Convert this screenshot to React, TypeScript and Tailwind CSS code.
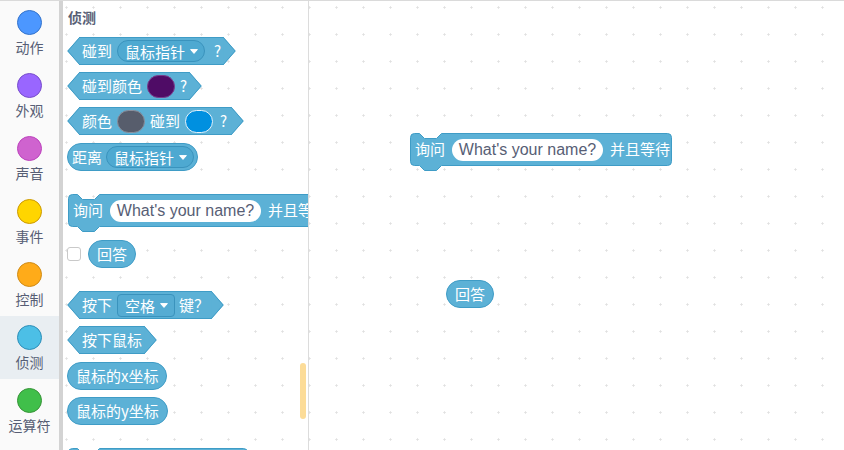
import React from 'react';

const cats = [
  { label: '动作', cls: 'bg-[#4c97ff] border-[#3373cc]' },
  { label: '外观', cls: 'bg-[#9966ff] border-[#774dcb]' },
  { label: '声音', cls: 'bg-[#cf63cf] border-[#bd42bd]' },
  { label: '事件', cls: 'bg-[#ffd500] border-[#cc9900]' },
  { label: '控制', cls: 'bg-[#ffab19] border-[#cf8b17]' },
  { label: '侦测', cls: 'bg-[#4cbfe6] border-[#2e8eb8]', active: true },
  { label: '运算符', cls: 'bg-[#40bf4a] border-[#389438]' },
];

function Caret() {
  return (
    <svg width="8" height="5" viewBox="0 0 8 5" className="block shrink-0">
      <path d="M0.6,0.6 L7.4,0.6 L4,4.4 Z" fill="#fff" stroke="#fff" strokeWidth="1" strokeLinejoin="round" />
    </svg>
  );
}

function Dropdown({ text, square }: { text: string; square?: boolean }) {
  return (
    <div
      className={
        square
          ? 'flex h-[23px] items-center gap-[5px] rounded-[4px] border border-[#3a93bd] bg-[#55acd3] pl-[7px] pr-[6px]'
          : 'flex h-[22px] items-center gap-[5px] rounded-full border border-[#3a93bd] bg-[#4ea9d1] pl-[7px] pr-[6px]'
      }
    >
      <span className="leading-none">{text}</span>
      <Caret />
    </div>
  );
}

function Hex({ children, className }: { children: React.ReactNode; className?: string }) {
  return (
    <div className={'flex h-[28px] shrink-0 text-[15px] text-white ' + (className || '')}>
      <svg width="12" height="28" className="block shrink-0 overflow-visible">
        <polygon points="12.6,0 0.4,14 12.6,28" fill="#5cb1d6" />
        <polyline points="12.6,0.5 0.8,14 12.6,27.5" fill="none" stroke="#3f9cc6" strokeWidth="1" />
      </svg>
      <div className="flex items-center gap-[5px] border-y border-[#3f9cc6] bg-[#5cb1d6] px-[3px]">{children}</div>
      <svg width="12" height="28" className="block shrink-0 overflow-visible">
        <polygon points="-0.6,0 11.6,14 -0.6,28" fill="#5cb1d6" />
        <polyline points="-0.6,0.5 11.2,14 -0.6,27.5" fill="none" stroke="#3f9cc6" strokeWidth="1" />
      </svg>
    </div>
  );
}

function Reporter({ children, className }: { children: React.ReactNode; className?: string }) {
  return (
    <div
      className={
        'flex h-[28px] shrink-0 items-center rounded-full border border-[#3f9cc6] bg-[#5cb1d6] text-[15px] text-white ' +
        (className || '')
      }
    >
      {children}
    </div>
  );
}

function CommandShape({ w, h }: { w: number; h: number }) {
  const d = `M0.5,4.5 A4,4 0 0 1 4.5,0.5 H9.5 l5,5 h12 l5,-5 H${w - 4.5} A4,4 0 0 1 ${w - 0.5},4.5 V${h - 4.5} A4,4 0 0 1 ${w - 4.5},${h - 0.5} H31.5 l-5,5 h-12 l-5,-5 H4.5 A4,4 0 0 1 0.5,${h - 4.5} Z`;
  return (
    <svg width={w + 1} height={h + 6} className="absolute left-0 top-0 block">
      <path d={d} fill="#5cb1d6" stroke="#3f9cc6" strokeWidth="1" />
    </svg>
  );
}

function AskBlock({ className }: { className?: string }) {
  return (
    <div className={'relative h-[38px] w-[262px] shrink-0 ' + (className || '')}>
      <CommandShape w={262} h={33} />
      <div className="relative flex h-[33px] items-center gap-[7px] pl-[5px] text-[15px] text-white">
        <span className="whitespace-nowrap">询问</span>
        <div className="flex h-[22px] w-[151px] shrink-0 items-center justify-center rounded-full bg-white text-[16px] text-[#575e75] [font-family:'Liberation_Sans',Arial,sans-serif]">
          What's your name?
        </div>
        <span className="whitespace-nowrap">并且等待</span>
      </div>
    </div>
  );
}

function Swatch({ cls }: { cls: string }) {
  return <div className={'h-[23px] w-[28px] shrink-0 rounded-full border ' + cls} />;
}

export default function App() {
  return (
    <div className="flex h-[450px] w-[844px] overflow-hidden border-t border-[#dadada] bg-white bg-[radial-gradient(circle,#e0e0e0_0.9px,transparent_1.3px)] bg-[length:27px_27px] bg-[position:-1px_-7px] [font-family:'Noto_Sans_CJK_SC','Noto_Sans',sans-serif]">
      {/* category menu */}
      <div className="flex w-[59px] shrink-0 flex-col bg-[#fafafa]">
        {cats.map((c) => (
          <div
            key={c.label}
            className={'flex h-[63px] shrink-0 flex-col items-center ' + (c.active ? 'bg-[#e9eef2]' : '')}
          >
            <div className={'mt-[9px] h-[25px] w-[25px] rounded-full border ' + c.cls} />
            <div className="mt-[3px] whitespace-nowrap text-[14px] leading-[18px] text-[#575e75]">{c.label}</div>
          </div>
        ))}
      </div>
      <div className="w-[4px] shrink-0 bg-[#d3d3d3]" />

      {/* palette */}
      <div className="relative flex w-[246px] shrink-0 flex-col items-start overflow-hidden border-r border-[#dcdcdc] pl-[4px]">
        <div className="ml-[1px] mt-[6px] h-[20px] text-[14px] font-bold leading-[20px] text-[#575e75]">侦测</div>

        <Hex className="mt-[10px]">
          <span>碰到</span>
          <Dropdown text="鼠标指针" />
          <span className="ml-[4px]">?</span>
        </Hex>

        <Hex className="mt-[7px]">
          <span>碰到颜色</span>
          <Swatch cls="bg-[#4f0c66] border-[#7a3d8c]" />
          <span>?</span>
        </Hex>

        <Hex className="mt-[7px]">
          <span>颜色</span>
          <Swatch cls="bg-[#575d6c] border-[#8a8f9c]" />
          <span>碰到</span>
          <Swatch cls="bg-[#0090e0] border-[#e6f3fb]" />
          <span className="ml-[2px] mr-[2px]">?</span>
        </Hex>

        <Reporter className="mt-[8px] gap-[4px] pl-[4px] pr-[3px]">
          <span>距离</span>
          <Dropdown text="鼠标指针" />
        </Reporter>

        <AskBlock className="ml-[1px] mt-[23px]" />

        <div className="mt-[8px] flex items-center gap-[7px]">
          <div className="h-[14px] w-[14px] rounded-[3px] border border-[#c9c9c9] bg-white" />
          <Reporter className="px-[8px]">
            <span>回答</span>
          </Reporter>
        </div>

        <Hex className="mt-[23px]">
          <span>按下</span>
          <Dropdown text="空格" square />
          <span className="ml-[-1px]">键？</span>
        </Hex>

        <Hex className="mt-[7px]">
          <span>按下鼠标</span>
        </Hex>

        <Reporter className="mt-[8px] px-[8px]">
          <span>鼠标的x坐标</span>
        </Reporter>

        <Reporter className="mt-[7px] px-[8px]">
          <span>鼠标的y坐标</span>
        </Reporter>

        <div className="relative ml-[1px] mt-[23px] h-[38px] w-[180px] shrink-0">
          <CommandShape w={180} h={33} />
        </div>

        <div className="absolute left-[237px] top-[362px] h-[56px] w-[6px] rounded-full bg-[#fcdc98]" />
      </div>

      {/* workspace */}
      <div className="relative flex-1">
        <AskBlock className="absolute left-[101px] top-[132px]" />
        <Reporter className="absolute left-[137px] top-[279px] px-[8px]">
          <span>回答</span>
        </Reporter>
      </div>
    </div>
  );
}
